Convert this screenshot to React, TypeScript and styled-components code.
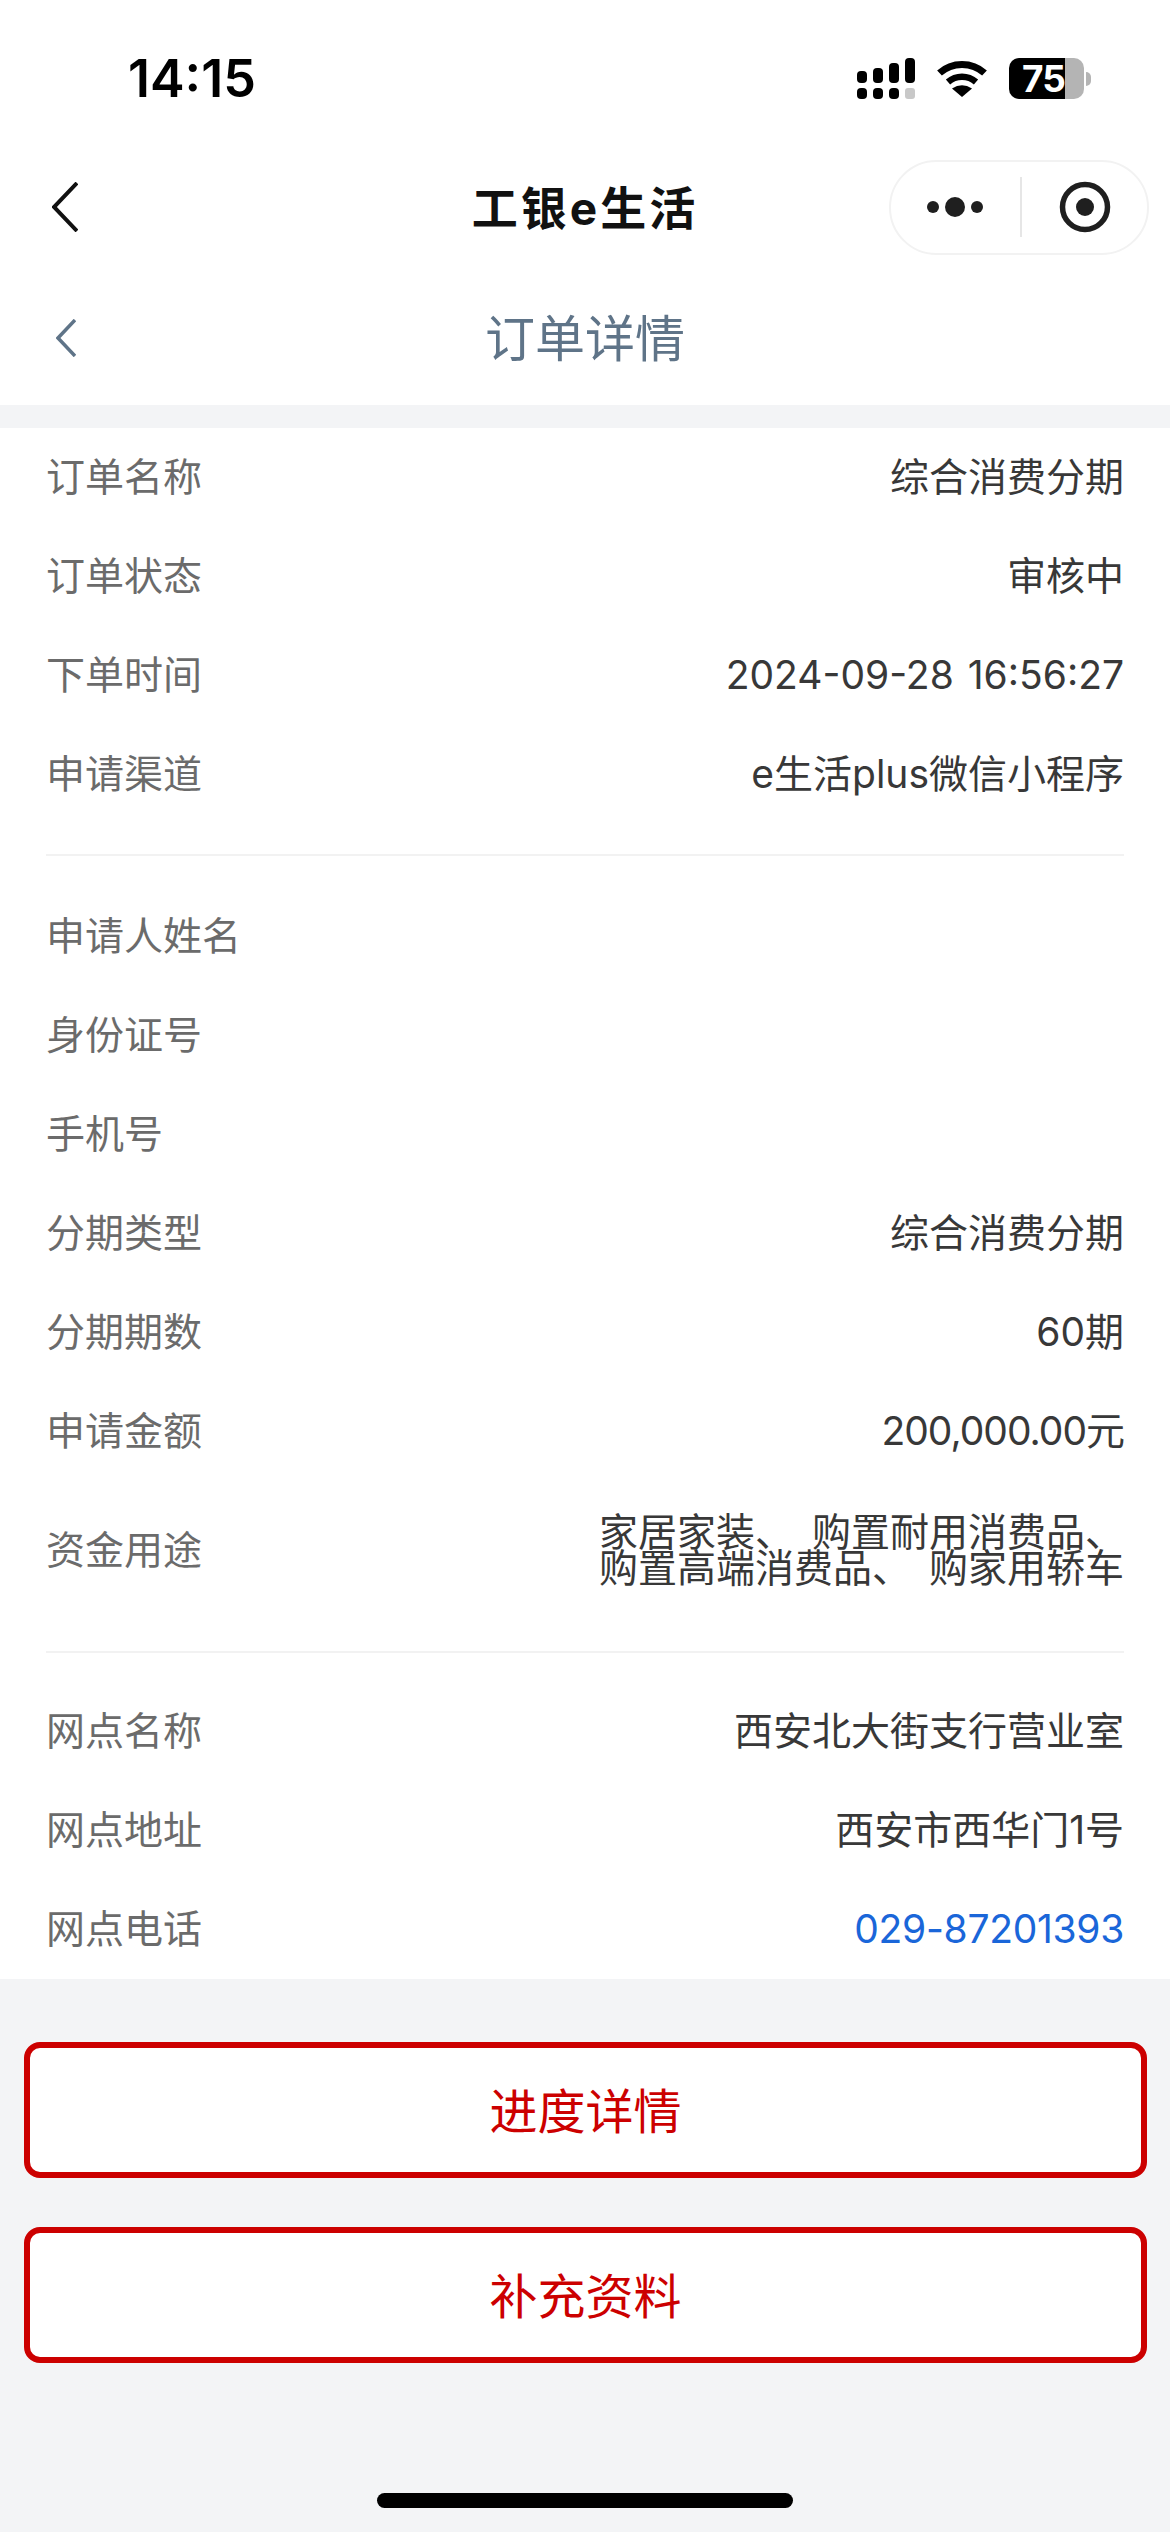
import React from 'react';
import styled, { createGlobalStyle } from 'styled-components';

const fontStack = `Inter, "Noto Sans CJK SC", sans-serif`;

const GlobalStyle = createGlobalStyle`
  html, body {
    margin: 0;
    padding: 0;
    background: #f3f4f6;
  }
  * {
    box-sizing: border-box;
  }
`;

const Page = styled.div`
  width: 1170px;
  height: 2532px;
  overflow: hidden;
  background: #f3f4f6;
  font-family: ${fontStack};
  display: flex;
  flex-direction: column;
`;

const Header = styled.header`
  background: #fff;
  margin-bottom: 23px;
`;

const StatusBar = styled.div`
  height: 157px;
  padding: 0 79px 0 128px;
  display: flex;
  align-items: center;
  justify-content: space-between;
`;

const Clock = styled.span`
  font-size: 52px;
  font-weight: 600;
  color: #000;
`;

const StatusIcons = styled.div`
  display: flex;
  align-items: center;
  gap: 22px;
`;

const BatteryWrap = styled.div`
  display: flex;
  align-items: center;
  gap: 2px;
`;

const BatteryBody = styled.div`
  width: 75px;
  height: 41px;
  border-radius: 10px;
  background: linear-gradient(to right, #000 0, #000 56px, #b4b4b4 56px, #b4b4b4 100%);
  color: #fff;
  font-size: 37px;
  font-weight: 700;
  letter-spacing: -1px;
  line-height: 41px;
  padding-left: 13px;
`;

const BatteryTip = styled.div`
  width: 5px;
  height: 14px;
  border-radius: 0 5px 5px 0;
  background: #b4b4b4;
`;

const NavBar = styled.div`
  height: 100px;
  display: grid;
  grid-template-columns: 1fr auto 1fr;
  align-items: center;
  padding: 0 21px;
`;

const NavBack = styled.div`
  display: flex;
  margin-left: 31px;
`;

const NavTitle = styled.h1`
  margin: 0 0 5px;
  font-size: 46px;
  font-weight: 700;
  color: #111;
  letter-spacing: 3px;
`;

const Capsule = styled.div`
  justify-self: end;
  width: 260px;
  height: 95px;
  border: 2px solid #f2f2f2;
  border-radius: 48px;
  display: flex;
  align-items: center;
  padding: 0 36px;
`;

const CapsuleDivider = styled.div`
  width: 2px;
  height: 60px;
  background: #e6e6e6;
  margin: 0 auto 0 37px;
`;

const SubHeader = styled.div`
  height: 148px;
  padding: 14px 56px 0;
  display: grid;
  grid-template-columns: 1fr auto 1fr;
  align-items: center;
`;

const SubTitle = styled.h2`
  margin: 0 0 6px;
  font-size: 50px;
  font-weight: 400;
  color: #5f7488;
`;

const Details = styled.main`
  background: #fff;
  padding: 0 46px;
`;

const Group = styled.section<{ $bottom: number }>`
  padding-bottom: ${({ $bottom }) => $bottom}px;
`;

const Divider = styled.hr<{ $after: number }>`
  margin: 0 0 ${({ $after }) => $after}px;
  border: 0;
  height: 2px;
  background: #f2f2f2;
`;

const Row = styled.div<{ $tall?: boolean }>`
  height: ${({ $tall }) => ($tall ? 140 : 99)}px;
  padding-bottom: 2px;
  display: flex;
  align-items: center;
  justify-content: space-between;
  font-size: 39px;
  line-height: 36px;
`;

const Label = styled.span`
  color: #6b6b6b;
`;

const Value = styled.span<{ $link?: boolean; $track?: number }>`
  color: ${({ $link }) => ($link ? '#1a66d9' : '#383838')};
  text-align: right;
  word-spacing: 3px;
  letter-spacing: ${({ $track }) => $track ?? 0}px;
`;

const PurposeValue = styled(Value)`
  word-spacing: 7px;
`;

const Actions = styled.div`
  flex: 1;
  padding: 63px 23px 0 24px;
  display: flex;
  flex-direction: column;
  gap: 49px;
`;

const ActionButton = styled.button`
  height: 136px;
  width: 100%;
  border: 6px solid #cc0000;
  border-radius: 16px;
  background: #fff;
  color: #cc0000;
  font-family: inherit;
  font-size: 48px;
  font-weight: 400;
  padding: 0 0 4px;
`;

const HomeBar = styled.div`
  align-self: center;
  width: 416px;
  height: 15px;
  border-radius: 8px;
  background: #000;
  margin: 0 0 24px;
`;

const SignalIcon = () => (
  <svg width="58" height="41" viewBox="0 0 58 41">
    <rect x="0" y="13" width="10" height="12" rx="4" />
    <rect x="16" y="10" width="10" height="15" rx="4" />
    <rect x="32" y="5" width="10" height="20" rx="4" />
    <rect x="48" y="0" width="10" height="25" rx="4" />
    <rect x="0" y="30" width="10" height="11" rx="4" />
    <rect x="16" y="30" width="10" height="11" rx="4" />
    <rect x="32" y="30" width="10" height="11" rx="4" />
    <rect x="48" y="30" width="10" height="11" rx="3" fill="#c8c8c8" />
  </svg>
);

const WifiIcon = () => (
  <svg width="50" height="38" viewBox="0 0 50 38">
    <path d="M2.5 13 C15 1.5 35 1.5 47.5 13" fill="none" stroke="#000" strokeWidth="7" />
    <path d="M11 22 C19 15 31 15 39 22" fill="none" stroke="#000" strokeWidth="6.5" />
    <path d="M25 37 L15 28.5 Q25 22 35 28.5 Z" />
  </svg>
);

const BackIcon = ({ color, width, height, stroke }: { color: string; width: number; height: number; stroke: number }) => (
  <svg width={width} height={height} viewBox={`0 0 ${width} ${height}`}>
    <path d={`M${width - 1} 1 L2 ${height / 2} L${width - 1} ${height - 1}`} fill="none" stroke={color} strokeWidth={stroke} />
  </svg>
);

const DotsIcon = () => (
  <svg width="56" height="22" viewBox="0 0 56 22" fill="#1f1f1f">
    <circle cx="6" cy="11" r="6" />
    <circle cx="28" cy="11" r="10" />
    <circle cx="50" cy="11" r="6" />
  </svg>
);

const TargetIcon = () => (
  <svg width="52" height="52" viewBox="0 0 52 52">
    <circle cx="26" cy="26" r="22.5" fill="none" stroke="#1f1f1f" strokeWidth="5.5" />
    <circle cx="26" cy="26" r="9" fill="#1f1f1f" />
  </svg>
);

const App: React.FC = () => (
  <Page>
    <GlobalStyle />
    <Header>
      <StatusBar>
        <Clock>14:15</Clock>
        <StatusIcons>
          <SignalIcon />
          <WifiIcon />
          <BatteryWrap>
            <BatteryBody>75</BatteryBody>
            <BatteryTip />
          </BatteryWrap>
        </StatusIcons>
      </StatusBar>
      <NavBar>
        <NavBack>
          <BackIcon color="#111" width={26} height={50} stroke={4} />
        </NavBack>
        <NavTitle>工银e生活</NavTitle>
        <Capsule>
          <DotsIcon />
          <CapsuleDivider />
          <TargetIcon />
        </Capsule>
      </NavBar>
      <SubHeader>
        <BackIcon color="#5f7488" width={20} height={38} stroke={3.5} />
        <SubTitle>订单详情</SubTitle>
      </SubHeader>
    </Header>

    <Details>
      <Group $bottom={30}>
        <Row><Label>订单名称</Label><Value>综合消费分期</Value></Row>
        <Row><Label>订单状态</Label><Value>审核中</Value></Row>
        <Row><Label>下单时间</Label><Value>2024-09-28 16:56:27</Value></Row>
        <Row><Label>申请渠道</Label><Value>e生活plus微信小程序</Value></Row>
      </Group>
      <Divider $after={31} />
      <Group $bottom={30}>
        <Row><Label>申请人姓名</Label></Row>
        <Row><Label>身份证号</Label></Row>
        <Row><Label>手机号</Label></Row>
        <Row><Label>分期类型</Label><Value>综合消费分期</Value></Row>
        <Row><Label>分期期数</Label><Value>60期</Value></Row>
        <Row><Label>申请金额</Label><Value $track={-1}>200,000.00元</Value></Row>
        <Row $tall>
          <Label>资金用途</Label>
          <PurposeValue>家居家装、 购置耐用消费品、<br />购置高端消费品、 购家用轿车</PurposeValue>
        </Row>
      </Group>
      <Divider $after={29} />
      <Group $bottom={0}>
        <Row><Label>网点名称</Label><Value>西安北大街支行营业室</Value></Row>
        <Row><Label>网点地址</Label><Value>西安市西华门1号</Value></Row>
        <Row><Label>网点电话</Label><Value $link $track={-0.3}>029-87201393</Value></Row>
      </Group>
    </Details>

    <Actions>
      <ActionButton>进度详情</ActionButton>
      <ActionButton>补充资料</ActionButton>
    </Actions>
    <HomeBar />
  </Page>
);

export default App;
